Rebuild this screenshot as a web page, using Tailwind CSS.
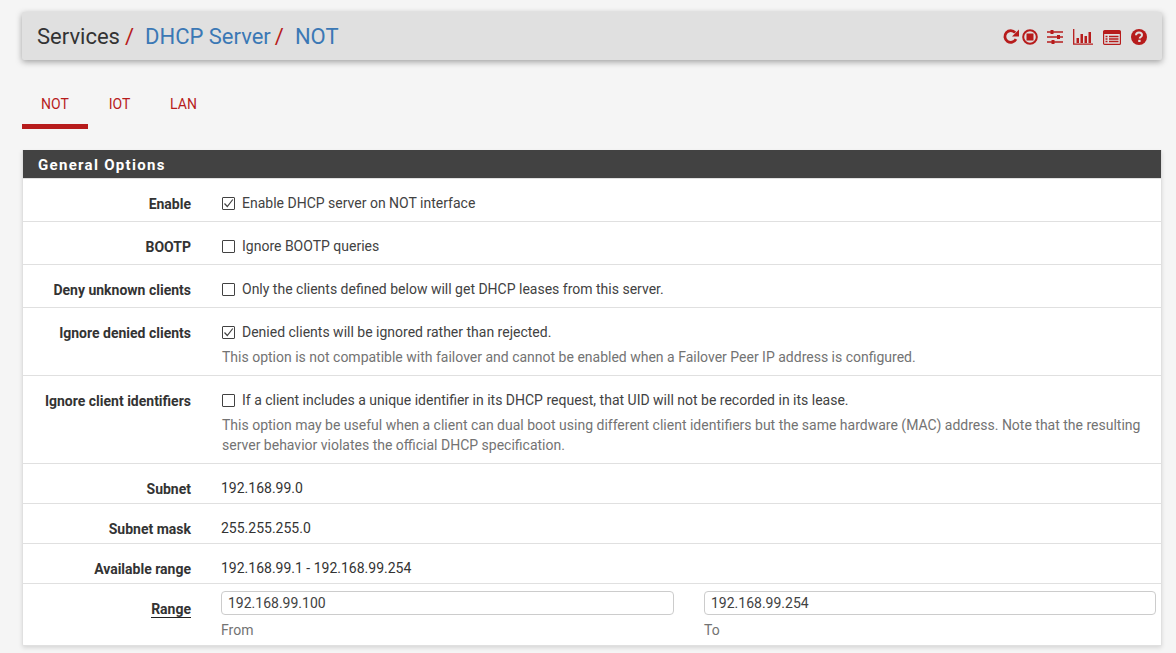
<!DOCTYPE html>
<html lang="en">
<head>
  <meta charset="UTF-8" />
  <title>Services / DHCP Server / NOT</title>
  <script src="https://cdn.jsdelivr.net/npm/@tailwindcss/browser@4"></script>
</head>
<body class="bg-[#f5f5f5] font-['Roboto',sans-serif] text-[14px] text-[#212121] h-[653px] overflow-hidden">
  <div class="px-[22px] pt-[12px]">
    <!-- breadcrumb bar -->
    <div class="h-[48px] w-[1140px] bg-[#e0e0e0] rounded-[2px] shadow-[0_2px_6px_rgba(0,0,0,0.35)] flex items-center justify-between pl-[15px] pr-[15px]">
      <div class="text-[22px] leading-[48px] pt-[1px] text-[#333] flex whitespace-pre">
        <span>Services</span><span class="text-[#b71c1c] ml-[5px]">/</span><span class="text-[#3b78b5] ml-[11px]">DHCP Server</span><span class="text-[#b71c1c] ml-[4px]">/</span><span class="text-[#3b78b5] ml-[11px]">NOT</span>
      </div>
      <div class="flex items-center text-[#b71c1c] pt-[2px]">
        <svg width="17" height="16" viewBox="0 0 17 16" class="mr-[2px]"><path d="M13 10.200A5.900 5.900 0 1 1 12.200 3.600" fill="none" stroke="currentColor" stroke-width="2.800"/><path d="M16 .5v7H9z" fill="currentColor"/></svg>
        <svg width="16" height="16" viewBox="0 0 16 16" class="mr-[9px]"><circle cx="8" cy="8" r="6.800" fill="none" stroke="currentColor" stroke-width="2"/><rect x="4.500" y="4.500" width="7" height="7" fill="currentColor"/></svg>
        <svg width="16" height="16" viewBox="0 0 16 16" class="mr-[10px]"><path d="M0 3h16M0 8h16M0 13h16" stroke="currentColor" stroke-width="1.500"/><path d="M3.500 1h3v4h-3zM10 6h3v4h-3zM4.500 11h3v4h-3z" fill="currentColor"/></svg>
        <svg width="20" height="16" viewBox="0 0 20 16" class="mr-[10px]"><path d="M.7 0v15.200H20" fill="none" stroke="currentColor" stroke-width="1.300"/><path d="M3.500 9h2.500v5H3.500zM7.500 5h2.500v9H7.500zM11.500 7h2.500v7H11.500zM15.500 3h2.500v11H15.500z" fill="currentColor"/></svg>
        <svg width="18" height="15" viewBox="0 0 18 15" class="mr-[10px]"><rect x=".6" y=".6" width="16.800" height="13.800" rx="1" fill="none" stroke="currentColor" stroke-width="1.200"/><rect x="1" y="1" width="16" height="3" fill="currentColor"/><path d="M2.500 6.500h2M6 6.500h9.500M2.500 9h2M6 9h9.500M2.500 11.500h2M6 11.500h9.500" stroke="currentColor" stroke-width="1.300"/></svg>
        <svg width="16" height="16" viewBox="0 0 16 16"><circle cx="8" cy="8" r="8" fill="currentColor"/><path d="M5 6.200C5.100 4.500 6.400 3.500 8 3.500c1.700 0 3 1 3 2.500 0 2.100-2.300 2-2.300 3.600" fill="none" stroke="#e0e0e0" stroke-width="2"/><rect x="7.200" y="10.800" width="2.400" height="2.200" fill="#e0e0e0"/></svg>
      </div>
    </div>

    <!-- tabs -->
    <ul class="flex mt-[20px] h-[49px] text-[#b71c1c]">
      <li class="w-[66px] border-b-[5px] border-[#b71c1c] flex items-start justify-center pt-[14px]">NOT</li>
      <li class="w-[63px] flex items-start justify-center pt-[14px]">IOT</li>
      <li class="w-[65px] flex items-start justify-center pt-[14px]">LAN</li>
    </ul>

    <!-- panel -->
    <div class="mt-[21px] w-[1140px] bg-white border border-[#e0e0e0] border-t-0 shadow-[0_2px_4px_rgba(0,0,0,0.12)] rounded-b-[2px]">
      <h2 class="h-[29px] bg-[#424242] text-white font-bold text-[15px] tracking-[1.300px] leading-[31px] pl-[15px] border-b border-[#e0e0e0]">General Options</h2>

      <div class="flex h-[43px] border-b border-[#e0e0e0]">
        <div class="w-[168px] text-right font-bold text-[#333] pt-[15px] leading-[20px] shrink-0">Enable</div>
        <div class="ml-[31px] pt-[14px] leading-[20px] flex items-start text-[#424242]"><span class="w-[13px] h-[13px] border border-[#424242] rounded-[1px] mt-[4px] mr-[7px] flex items-center justify-center"><svg width="11" height="11" viewBox="0 0 11 11"><path d="M1.500 5.500l2.800 3L9.800 1.500" fill="none" stroke="#424242" stroke-width="1.200"/></svg></span>Enable DHCP server on NOT interface</div>
      </div>

      <div class="flex h-[43px] border-b border-[#e0e0e0]">
        <div class="w-[168px] text-right font-bold text-[#333] pt-[15px] leading-[20px] shrink-0">BOOTP</div>
        <div class="ml-[31px] pt-[14px] leading-[20px] flex items-start text-[#424242]"><span class="w-[13px] h-[13px] border border-[#424242] rounded-[1px] mt-[4px] mr-[7px]"></span>Ignore BOOTP queries</div>
      </div>

      <div class="flex h-[43px] border-b border-[#e0e0e0]">
        <div class="w-[168px] text-right font-bold text-[#333] pt-[15px] leading-[20px] shrink-0">Deny unknown clients</div>
        <div class="ml-[31px] pt-[14px] leading-[20px] flex items-start text-[#424242]"><span class="w-[13px] h-[13px] border border-[#424242] rounded-[1px] mt-[4px] mr-[7px]"></span>Only the clients defined below will get DHCP leases from this server.</div>
      </div>

      <div class="flex h-[68px] border-b border-[#e0e0e0]">
        <div class="w-[168px] text-right font-bold text-[#333] pt-[15px] leading-[20px] shrink-0">Ignore denied clients</div>
        <div class="ml-[31px] pt-[14px] leading-[20px]">
          <div class="flex items-start text-[#424242]"><span class="w-[13px] h-[13px] border border-[#424242] rounded-[1px] mt-[4px] mr-[7px] flex items-center justify-center"><svg width="11" height="11" viewBox="0 0 11 11"><path d="M1.500 5.500l2.800 3L9.800 1.500" fill="none" stroke="#424242" stroke-width="1.200"/></svg></span>Denied clients will be ignored rather than rejected.</div>
          <p class="mt-[5px] text-[#737373]">This option is not compatible with failover and cannot be enabled when a Failover Peer IP address is configured.</p>
        </div>
      </div>

      <div class="flex h-[88px] border-b border-[#e0e0e0]">
        <div class="w-[168px] text-right font-bold text-[#333] pt-[15px] leading-[20px] shrink-0">Ignore client identifiers</div>
        <div class="ml-[31px] pt-[14px] leading-[20px] w-[925px]">
          <div class="flex items-start text-[#424242]"><span class="w-[13px] h-[13px] border border-[#424242] rounded-[1px] mt-[4px] mr-[7px]"></span>If a client includes a unique identifier in its DHCP request, that UID will not be recorded in its lease.</div>
          <p class="mt-[5px] text-[#737373]">This option may be useful when a client can dual boot using different client identifiers but the same hardware (MAC) address. Note that the resulting server behavior violates the official DHCP specification.</p>
        </div>
      </div>

      <div class="flex h-[40px] border-b border-[#e0e0e0]">
        <div class="w-[168px] text-right font-bold text-[#333] pt-[15px] leading-[20px] shrink-0">Subnet</div>
        <div class="ml-[30px] pt-[14px] leading-[20px] text-[#333]">192.168.99.0</div>
      </div>
      <div class="flex h-[40px] border-b border-[#e0e0e0]">
        <div class="w-[168px] text-right font-bold text-[#333] pt-[15px] leading-[20px] shrink-0">Subnet mask</div>
        <div class="ml-[30px] pt-[14px] leading-[20px] text-[#333]">255.255.255.0</div>
      </div>
      <div class="flex h-[40px] border-b border-[#e0e0e0]">
        <div class="w-[168px] text-right font-bold text-[#333] pt-[15px] leading-[20px] shrink-0">Available range</div>
        <div class="ml-[30px] pt-[14px] leading-[20px] text-[#333]">192.168.99.1 - 192.168.99.254</div>
      </div>

      <div class="flex h-[61px]">
        <div class="w-[168px] text-right font-bold text-[#333] pt-[15px] leading-[20px] shrink-0"><span class="border-b border-[#212121]">Range</span></div>
        <div class="ml-[30px] pt-[7px] flex gap-[30px]">
          <div class="w-[453px]">
            <div class="h-[24px] border border-[#ccc] rounded-[4px] px-[6px] leading-[22px] text-[#424242]">192.168.99.100</div>
            <p class="mt-[5px] leading-[20px] text-[#737373]">From</p>
          </div>
          <div class="w-[452px]">
            <div class="h-[24px] border border-[#ccc] rounded-[4px] px-[6px] leading-[22px] text-[#424242]">192.168.99.254</div>
            <p class="mt-[5px] leading-[20px] text-[#737373]">To</p>
          </div>
        </div>
      </div>
    </div>
  </div>
</body>
</html>
